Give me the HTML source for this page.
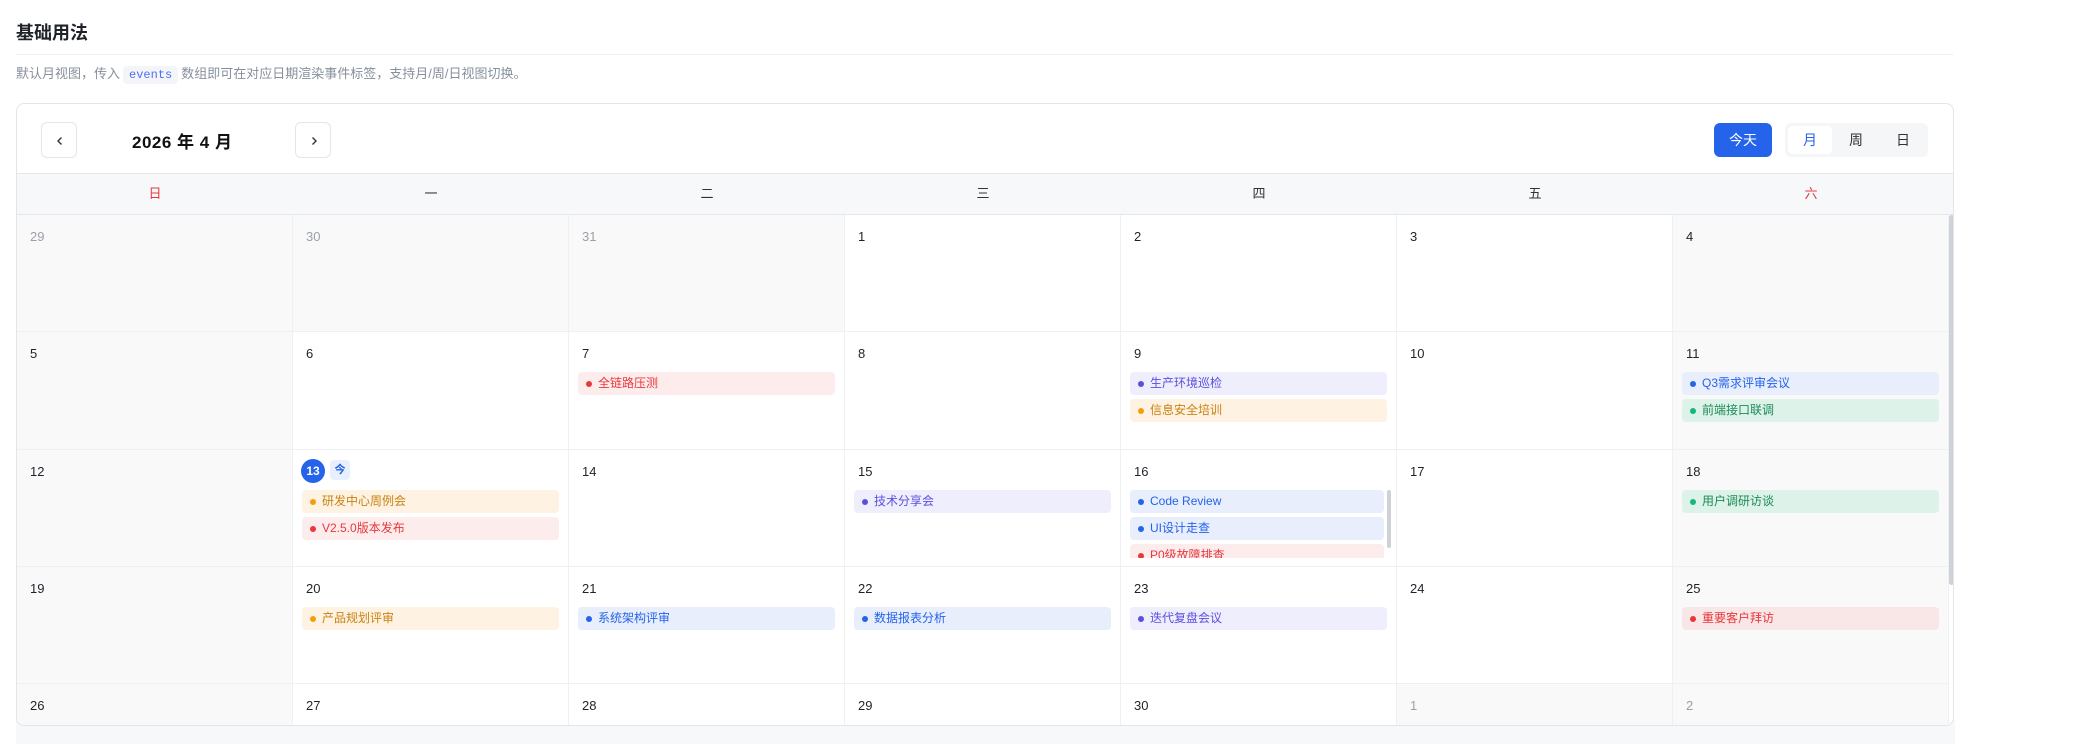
<!DOCTYPE html>
<html><head><meta charset="utf-8"><style>
*{box-sizing:border-box;margin:0;padding:0}
html,body{width:2075px;height:744px;overflow:hidden}
body{background:#fff;font-family:"Liberation Sans","Noto Sans CJK SC",sans-serif;position:relative;color:#1f2329}
h1{position:absolute;left:16px;top:19px;font-size:18px;font-weight:700;color:#1f2329}
.hr{position:absolute;left:16px;top:54px;width:1937px;height:1px;background:#eceef1}
.desc{position:absolute;left:16px;top:64px;font-size:13px;color:#86909c;line-height:20px}
.desc code{font-family:"Liberation Mono",monospace;font-size:12px;color:#4f6ef7;background:#f3f5f9;padding:2px 6px;border-radius:4px;margin:0 3px}
.band{position:absolute;left:16px;top:720px;width:1939px;height:24px;background:#f7f8fa}
.card{position:absolute;left:16px;top:103px;width:1938px;height:623px;border:1px solid #e3e5e9;border-radius:8px;background:#fff;overflow:hidden}
.nav{position:absolute;top:18px;width:36px;height:36px;border:1px solid #e3e5e9;border-radius:6px;background:#fff}
.nav svg{position:absolute;left:12px;top:12px}
.ttl{position:absolute;left:115px;top:24px;font-size:17px;font-weight:700;color:#111;letter-spacing:0.5px}
.today{position:absolute;left:1697px;top:19px;width:58px;height:34px;background:#2563eb;color:#fff;border-radius:6px;font-size:14px;text-align:center;line-height:34px}
.seg{position:absolute;left:1768px;top:19px;width:143px;height:34px;background:#f5f6f8;border-radius:6px}
.seg span{position:absolute;top:3px;width:44px;height:28px;line-height:28px;text-align:center;font-size:14px;color:#333}
.seg .on{background:#fff;color:#2563eb;border-radius:5px}
.wk{position:absolute;left:0;top:69px;width:1938px;height:42px;background:#f7f8fa;border-top:1px solid #e5e7eb;border-bottom:1px solid #e5e7eb}
.wk span{position:absolute;top:0;width:276px;text-align:center;line-height:40px;font-size:13px;color:#333}
.body{position:absolute;left:0;top:111px;width:1938px;height:511px;overflow:hidden}
.cell{position:absolute;width:276px;height:117.3px;border-right:1px solid #eef0f2;border-bottom:1px solid #eef0f2;background:#fff;overflow:hidden}
.cell.g{background:#f9f9fa}
.cell .n{position:absolute;left:13px;top:13px;font-size:13px;color:#1f2329;line-height:18px}
.cell.o .n{color:#9aa0aa}
.ev{position:absolute;left:9px;right:9px;height:23px;border-radius:4px;font-size:12px;line-height:23px;padding-left:20px;white-space:nowrap;overflow:hidden}
.ev:before{content:"";position:absolute;left:8px;top:9px;width:6px;height:6px;border-radius:50%;background:currentColor}
.r{background:#fdecec;color:#e8383d}
.p{background:#efeefc;color:#5a4fe0}
.y{background:#fef3e2;color:#c98212}
.y:before{background:#f59e0b!important}
.b{background:#e8eefc;color:#2563eb}
.gr{background:#ddf2e9;color:#1d8a57}
.gr:before{background:#10b981!important}
.tc{position:absolute;left:8px;top:9px;width:24px;height:24px;border-radius:50%;background:#2563eb;color:#fff;font-weight:700;font-size:12px;text-align:center;line-height:24px}
.tb{position:absolute;left:37px;top:10px;width:20px;height:20px;background:#e8f0fe;color:#2563eb;font-size:11px;text-align:center;line-height:20px;border-radius:4px;font-weight:700}
.sb{position:absolute;left:1932px;top:0;width:5px;height:370px;background:#cfd2d8;border-radius:3px}
</style></head><body>
<h1>基础用法</h1>
<div class="hr"></div>
<div class="desc">默认月视图，传入<code>events</code>数组即可在对应日期渲染事件标签，支持月/周/日视图切换。</div>
<div class="band"></div>
<div class="card">
<div class="nav" style="left:24px"><svg width="12" height="12" viewBox="0 0 12 12"><path d="M7.5 2.5 4 6l3.5 3.5" fill="none" stroke="#333" stroke-width="1.4"/></svg></div>
<div class="ttl">2026 年 4 月</div>
<div class="nav" style="left:278px"><svg width="12" height="12" viewBox="0 0 12 12"><path d="M4.5 2.5 8 6l-3.5 3.5" fill="none" stroke="#333" stroke-width="1.4"/></svg></div>
<div class="today">今天</div>
<div class="seg"><span class="on" style="left:3px">月</span><span style="left:49px">周</span><span style="left:96px">日</span></div>
<div class="wk">
<span style="left:0;color:#e8383d">日</span><span style="left:276px">一</span><span style="left:552px">二</span><span style="left:828px">三</span><span style="left:1104px">四</span><span style="left:1380px">五</span><span style="left:1656px;color:#e8383d">六</span>
</div>
<div class="body">
<div class="cell g o" style="left:0;top:0"><div class="n">29</div></div>
<div class="cell g o" style="left:276px;top:0"><div class="n">30</div></div>
<div class="cell g o" style="left:552px;top:0"><div class="n">31</div></div>
<div class="cell" style="left:828px;top:0"><div class="n">1</div></div>
<div class="cell" style="left:1104px;top:0"><div class="n">2</div></div>
<div class="cell" style="left:1380px;top:0"><div class="n">3</div></div>
<div class="cell g" style="left:1656px;top:0"><div class="n">4</div></div>
<div class="cell g" style="left:0;top:117.3px"><div class="n">5</div></div>
<div class="cell" style="left:276px;top:117.3px"><div class="n">6</div></div>
<div class="cell" style="left:552px;top:117.3px"><div class="n">7</div><div class="ev r" style="top:40px">全链路压测</div></div>
<div class="cell" style="left:828px;top:117.3px"><div class="n">8</div></div>
<div class="cell" style="left:1104px;top:117.3px"><div class="n">9</div><div class="ev p" style="top:40px">生产环境巡检</div><div class="ev y" style="top:67px">信息安全培训</div></div>
<div class="cell" style="left:1380px;top:117.3px"><div class="n">10</div></div>
<div class="cell g" style="left:1656px;top:117.3px"><div class="n">11</div><div class="ev b" style="top:40px">Q3需求评审会议</div><div class="ev gr" style="top:67px">前端接口联调</div></div>
<div class="cell g" style="left:0;top:234.6px"><div class="n">12</div></div>
<div class="cell" style="left:276px;top:234.6px"><div class="tc">13</div><div class="tb">今</div><div class="ev y" style="top:40px">研发中心周例会</div><div class="ev r" style="top:67px">V2.5.0版本发布</div></div>
<div class="cell" style="left:552px;top:234.6px"><div class="n">14</div></div>
<div class="cell" style="left:828px;top:234.6px"><div class="n">15</div><div class="ev p" style="top:40px">技术分享会</div></div>
<div class="cell" style="left:1104px;top:234.6px"><div class="n">16</div><div style="position:absolute;left:0;top:40px;width:276px;height:68px;overflow:hidden"><div class="ev b" style="top:0;right:13px">Code Review</div><div class="ev b" style="top:27px;right:13px">UI设计走查</div><div class="ev r" style="top:54px;right:13px">P0级故障排查</div><div style="position:absolute;left:266px;top:0;width:4px;height:58px;background:#cfd2d8;border-radius:2px"></div></div></div>
<div class="cell" style="left:1380px;top:234.6px"><div class="n">17</div></div>
<div class="cell g" style="left:1656px;top:234.6px"><div class="n">18</div><div class="ev gr" style="top:40px">用户调研访谈</div></div>
<div class="cell g" style="left:0;top:351.9px"><div class="n">19</div></div>
<div class="cell" style="left:276px;top:351.9px"><div class="n">20</div><div class="ev y" style="top:40px">产品规划评审</div></div>
<div class="cell" style="left:552px;top:351.9px"><div class="n">21</div><div class="ev b" style="top:40px">系统架构评审</div></div>
<div class="cell" style="left:828px;top:351.9px"><div class="n">22</div><div class="ev b" style="top:40px">数据报表分析</div></div>
<div class="cell" style="left:1104px;top:351.9px"><div class="n">23</div><div class="ev p" style="top:40px">迭代复盘会议</div></div>
<div class="cell" style="left:1380px;top:351.9px"><div class="n">24</div></div>
<div class="cell g" style="left:1656px;top:351.9px"><div class="n">25</div><div class="ev r" style="top:40px;background:#f9e6e6">重要客户拜访</div></div>
<div class="cell g" style="left:0;top:469.2px"><div class="n">26</div></div>
<div class="cell" style="left:276px;top:469.2px"><div class="n">27</div></div>
<div class="cell" style="left:552px;top:469.2px"><div class="n">28</div></div>
<div class="cell" style="left:828px;top:469.2px"><div class="n">29</div></div>
<div class="cell" style="left:1104px;top:469.2px"><div class="n">30</div></div>
<div class="cell g o" style="left:1380px;top:469.2px"><div class="n">1</div></div>
<div class="cell g o" style="left:1656px;top:469.2px"><div class="n">2</div></div>
<div class="sb"></div>
</div>
</div>
</body></html>
